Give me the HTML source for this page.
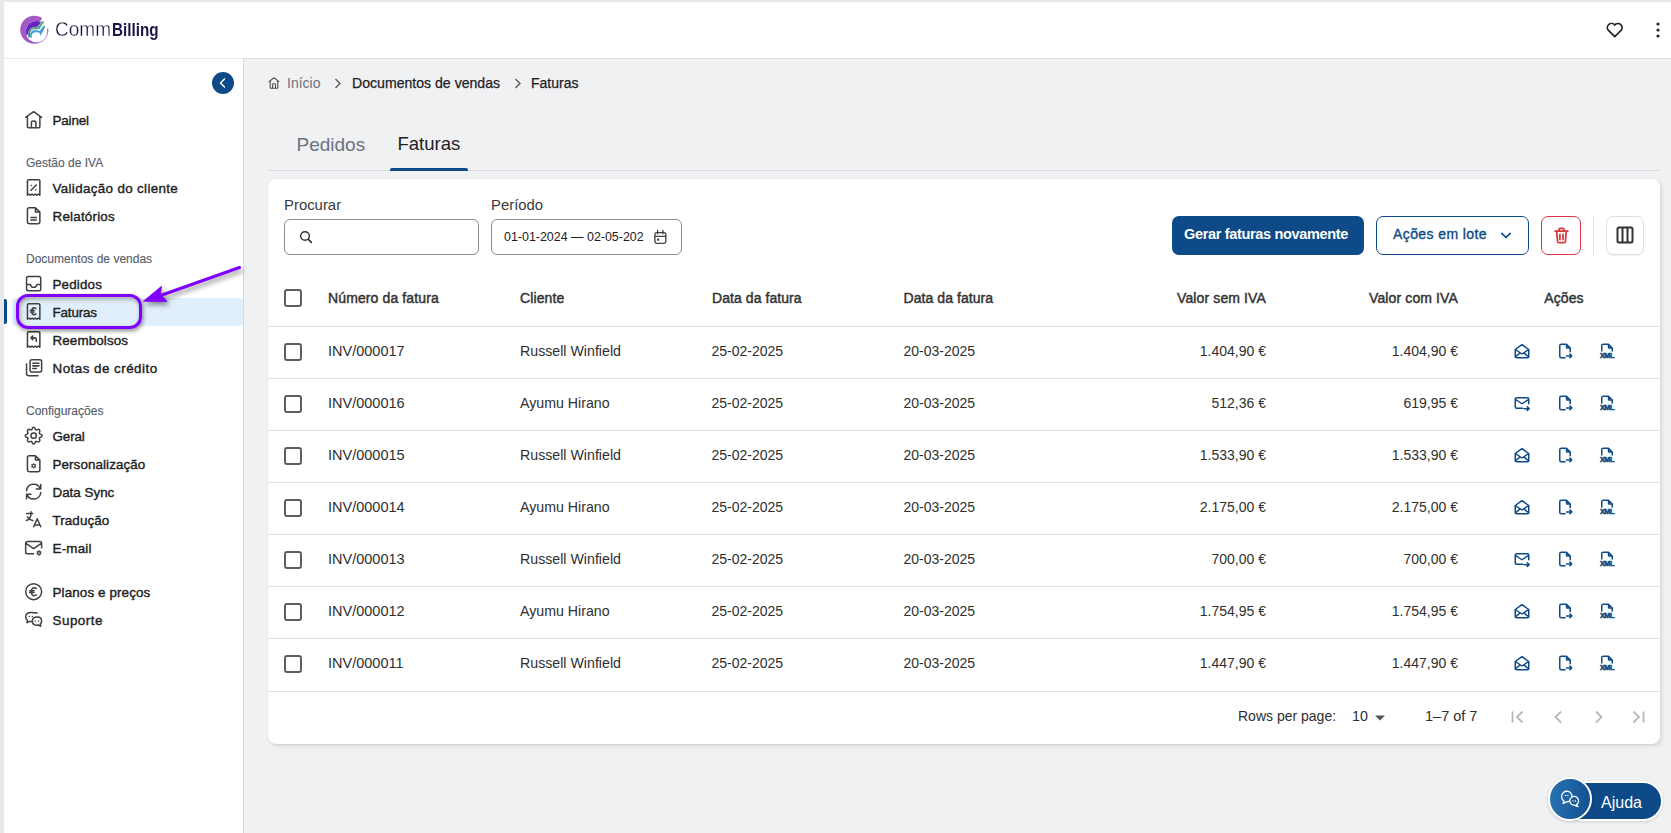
<!DOCTYPE html>
<html><head><meta charset="utf-8">
<style>
*{box-sizing:border-box;margin:0;padding:0}
html,body{width:1671px;height:833px;overflow:hidden;background:#e8e8e9;font-family:"Liberation Sans",sans-serif;color:#222}
.a{position:absolute}
.t{position:absolute;white-space:nowrap;line-height:1}
svg.a{overflow:visible}
</style></head><body>
<div class="a" style="left:4px;top:2px;width:1667px;height:56px;background:#fff"></div>
<div class="a" style="left:4px;top:58px;width:239px;height:1px;background:#ebebec"></div>
<div class="a" style="left:243px;top:58px;width:1428px;height:1px;background:#dcdde1"></div>
<div class="a" style="left:4px;top:59px;width:239px;height:774px;background:#fff"></div>
<div class="a" style="left:243px;top:58px;width:1px;height:775px;background:#d6d8dc"></div>
<div class="a" style="left:244px;top:59px;width:1427px;height:774px;background:#f0f1f3"></div>
<svg class="a" style="left:18px;top:13px;" width="34" height="34" viewBox="0 0 833 833">
<defs><clipPath id="cpin"><circle cx="455" cy="455" r="262"/></clipPath></defs>
<circle cx="400" cy="410" r="345" fill="#a35ac6"/>
<circle cx="455" cy="455" r="262" fill="#fff"/>
<path d="M400 410 L640 60 L800 60 L800 380 Z" fill="#fff"/>
<path d="M620 150 L600 175 L480 335 Q360 330 300 385 Q240 450 235 540 L100 540 L100 100 L620 100 Z" fill="#6a22c2" clip-path="url(#cpin)"/>
<path d="M255 590 Q235 450 300 385 Q360 330 480 335 L590 200 Q625 180 635 225 L530 395 Q470 410 400 400 Q320 400 300 470 Q290 530 300 595 Z" fill="#5aa98a"/>
<path d="M255 590 Q235 450 300 385 L310 410 Q280 470 290 595 Z" fill="#3f8a6e"/>
<path d="M300 610 Q280 500 330 450 Q380 415 450 420 Q500 425 530 440 L640 295 L665 350 L555 560 L520 480 Q470 465 420 470 Q350 480 340 540 Q335 580 335 615 Z" fill="#4a9de0"/>
</svg>
<div class="t" style="top:19.99px;font-size:19.5px;font-weight:400;color:#1d1446;left:54.5px;transform:scaleX(0.975);transform-origin:0 0;-webkit-text-stroke:0.3px #fff">Comm</div>
<div class="t" style="top:20.59px;font-size:18.8px;font-weight:700;color:#1d1446;left:111.5px;transform:scaleX(0.81);transform-origin:0 0">Billing</div>
<svg class="a" style="left:1604.5px;top:20px;" width="19.5" height="19.5" viewBox="0 0 24 24"><path d="M12 20.5 L4 12.5 A4.6 4.6 0 0 1 12 6.2 A4.6 4.6 0 0 1 20 12.5Z" fill="none" stroke="#222" stroke-width="2" stroke-linejoin="round"/></svg>
<svg class="a" style="left:1651px;top:20px;" width="14" height="20" viewBox="0 0 14 20"><circle cx="7" cy="4" r="1.6" fill="#222"/><circle cx="7" cy="10" r="1.6" fill="#222"/><circle cx="7" cy="16" r="1.6" fill="#222"/></svg>
<div class="a" style="left:212px;top:72px;width:22px;height:22px;background:#0d4a87;border-radius:50%"></div>
<svg class="a" style="left:212px;top:72px;" width="22" height="22" viewBox="0 0 22 22"><path d="M12.5 7 L8.5 11 L12.5 15" fill="none" stroke="#fff" stroke-width="1.4" stroke-linecap="round" stroke-linejoin="round"/></svg>
<div class="a" style="left:12px;top:298px;width:231px;height:28px;background:#e1eefb;border-radius:4px"></div>
<div class="a" style="left:4px;top:299px;width:3px;height:25px;background:#0d4a87;border-radius:0 2px 2px 0"></div>
<svg class="a" style="left:23.3px;top:109.3px;" width="21.3" height="21.3" viewBox="0 0 24 24"><path d="M3 9.5 L12 3 L21 9.5 M5 8 V20 Q5 21 6 21 H18 Q19 21 19 20 V8 M9.5 21 V15 Q9.5 13.5 12 13.5 Q14.5 13.5 14.5 15 V21" stroke="#404040" stroke-width="1.7" fill="none" stroke-linecap="round" stroke-linejoin="round"/></svg>
<div class="t" style="top:113.66px;font-size:13.4px;font-weight:400;color:#1f1f24;letter-spacing:-0.147px;left:52.5px;-webkit-text-stroke:0.4px #1f1f24">Painel</div>
<svg class="a" style="left:23.3px;top:177.3px;" width="21.3" height="21.3" viewBox="0 0 24 24"><path d="M5 20.5 V4.5 Q5 3 6.5 3 H17.5 Q19 3 19 4.5 V20.5 Q17.25 18.6 15.5 20.5 Q13.75 18.6 12 20.5 Q10.25 18.6 8.5 20.5 Q6.75 18.6 5 20.5 Z M9 15 L15 9" stroke="#404040" stroke-width="1.7" fill="none" stroke-linecap="round" stroke-linejoin="round"/><circle cx="9.5" cy="9.5" r="0.9" fill="#3a3a3a"/><circle cx="14.5" cy="14.5" r="0.9" fill="#3a3a3a"/></svg>
<div class="t" style="top:181.66px;font-size:13.4px;font-weight:400;color:#1f1f24;letter-spacing:0.338px;left:52.5px;-webkit-text-stroke:0.4px #1f1f24">Validação do cliente</div>
<svg class="a" style="left:23.3px;top:205.3px;" width="21.3" height="21.3" viewBox="0 0 24 24"><path d="M14 3 H7 Q5 3 5 5 V19 Q5 21 7 21 H17 Q19 21 19 19 V8 Z M14 3 V8 H19 M9 14 H15 M9 17 H15" stroke="#404040" stroke-width="1.7" fill="none" stroke-linecap="round" stroke-linejoin="round"/></svg>
<div class="t" style="top:209.66px;font-size:13.4px;font-weight:400;color:#1f1f24;letter-spacing:0.211px;left:52.5px;-webkit-text-stroke:0.4px #1f1f24">Relatórios</div>
<svg class="a" style="left:23.3px;top:273.3px;" width="21.3" height="21.3" viewBox="0 0 24 24"><path d="M4 6 Q4 4 6 4 H18 Q20 4 20 6 V18 Q20 20 18 20 H6 Q4 20 4 18 Z M4 13 H8 L10 16 H14 L16 13 H20" stroke="#404040" stroke-width="1.7" fill="none" stroke-linecap="round" stroke-linejoin="round"/></svg>
<div class="t" style="top:277.66px;font-size:13.4px;font-weight:400;color:#1f1f24;letter-spacing:0.166px;left:52.5px;-webkit-text-stroke:0.4px #1f1f24">Pedidos</div>
<svg class="a" style="left:23.3px;top:301.3px;" width="21.3" height="21.3" viewBox="0 0 24 24"><path d="M5 20.5 V4.5 Q5 3 6.5 3 H17.5 Q19 3 19 4.5 V20.5 Q17.25 18.6 15.5 20.5 Q13.75 18.6 12 20.5 Q10.25 18.6 8.5 20.5 Q6.75 18.6 5 20.5 Z M14.5 8.5 Q13.5 7.5 12.5 7.5 Q10 7.5 10 11.5 Q10 15.5 12.5 15.5 Q13.5 15.5 14.5 14.5 M8.5 10.5 H12.5 M8.5 12.5 H12.5" stroke="#404040" stroke-width="1.7" fill="none" stroke-linecap="round" stroke-linejoin="round"/></svg>
<div class="t" style="top:305.66px;font-size:13.4px;font-weight:400;color:#1f1f24;letter-spacing:-0.151px;left:52.5px;-webkit-text-stroke:0.4px #1f1f24">Faturas</div>
<svg class="a" style="left:23.3px;top:329.3px;" width="21.3" height="21.3" viewBox="0 0 24 24"><path d="M5 20.5 V4.5 Q5 3 6.5 3 H17.5 Q19 3 19 4.5 V20.5 Q17.25 18.6 15.5 20.5 Q13.75 18.6 12 20.5 Q10.25 18.6 8.5 20.5 Q6.75 18.6 5 20.5 Z M11 8 L9 10 L11 12 M9 10 H13 Q15 10 15 12.5 V14" stroke="#404040" stroke-width="1.7" fill="none" stroke-linecap="round" stroke-linejoin="round"/></svg>
<div class="t" style="top:333.66px;font-size:13.4px;font-weight:400;color:#1f1f24;letter-spacing:0.118px;left:52.5px;-webkit-text-stroke:0.4px #1f1f24">Reembolsos</div>
<svg class="a" style="left:23.3px;top:357.3px;" width="21.3" height="21.3" viewBox="0 0 24 24"><path d="M8 5 Q8 3 10 3 H19 Q21 3 21 5 V15 Q21 17 19 17 H10 Q8 17 8 15 Z M11 7 H18 M11 10 H18 M11 13 H15 M4 8 V19 Q4 21 6 21 H17" stroke="#404040" stroke-width="1.7" fill="none" stroke-linecap="round" stroke-linejoin="round"/></svg>
<div class="t" style="top:361.66px;font-size:13.4px;font-weight:400;color:#1f1f24;letter-spacing:0.472px;left:52.5px;-webkit-text-stroke:0.4px #1f1f24">Notas de crédito</div>
<svg class="a" style="left:23.3px;top:425.3px;" width="21.3" height="21.3" viewBox="0 0 24 24"><path d="M10.3 4.3 Q10.8 2.5 12 2.5 Q13.2 2.5 13.7 4.3 Q14.3 6 16 5.3 Q17.7 4.3 18.5 5.5 Q19.5 6.5 18.7 8 Q17.8 9.7 19.7 10.3 Q21.5 10.8 21.5 12 Q21.5 13.2 19.7 13.7 Q17.8 14.3 18.7 16 Q19.5 17.5 18.5 18.5 Q17.5 19.5 16 18.7 Q14.3 17.8 13.7 19.7 Q13.2 21.5 12 21.5 Q10.8 21.5 10.3 19.7 Q9.7 17.8 8 18.7 Q6.5 19.5 5.5 18.5 Q4.5 17.5 5.3 16 Q6.2 14.3 4.3 13.7 Q2.5 13.2 2.5 12 Q2.5 10.8 4.3 10.3 Q6.2 9.7 5.3 8 Q4.5 6.5 5.5 5.5 Q6.5 4.5 8 5.3 Q9.7 6.2 10.3 4.3Z" stroke="#404040" stroke-width="1.7" fill="none" stroke-linecap="round" stroke-linejoin="round"/><circle cx="12" cy="12" r="3" stroke="#404040" stroke-width="1.7" fill="none" stroke-linecap="round" stroke-linejoin="round"/></svg>
<div class="t" style="top:429.66px;font-size:13.4px;font-weight:400;color:#1f1f24;letter-spacing:-0.113px;left:52.5px;-webkit-text-stroke:0.4px #1f1f24">Geral</div>
<svg class="a" style="left:23.3px;top:453.3px;" width="21.3" height="21.3" viewBox="0 0 24 24"><path d="M14 3 H7 Q5 3 5 5 V19 Q5 21 7 21 H17 Q19 21 19 19 V8 Z M14 3 V8 H19" stroke="#404040" stroke-width="1.7" fill="none" stroke-linecap="round" stroke-linejoin="round"/><path d="M12 11.5 V17.5 M9.4 13 L14.6 16 M9.4 16 L14.6 13" stroke="#3a3a3a" stroke-width="1.3" fill="none"/><circle cx="12" cy="14.5" r="1.6" fill="#fff" stroke="#3a3a3a" stroke-width="1.2"/></svg>
<div class="t" style="top:457.66px;font-size:13.4px;font-weight:400;color:#1f1f24;letter-spacing:0.095px;left:52.5px;-webkit-text-stroke:0.4px #1f1f24">Personalização</div>
<svg class="a" style="left:23.3px;top:481.3px;" width="21.3" height="21.3" viewBox="0 0 24 24"><path d="M4 11 A8 8 0 0 1 19.5 9 M20 4 V9 H15 M20 13 A8 8 0 0 1 4.5 15 M4 20 V15 H9" stroke="#404040" stroke-width="1.7" fill="none" stroke-linecap="round" stroke-linejoin="round"/></svg>
<div class="t" style="top:485.66px;font-size:13.4px;font-weight:400;color:#1f1f24;letter-spacing:0.002px;left:52.5px;-webkit-text-stroke:0.4px #1f1f24">Data Sync</div>
<svg class="a" style="left:23.3px;top:509.3px;" width="21.3" height="21.3" viewBox="0 0 24 24"><path d="M4 5 H11 M9 3 V5 Q9 11 4 13 M5 9 Q7 12 11 13 M12 20 L16 11 L20 20 M13 18 H19" stroke="#404040" stroke-width="1.7" fill="none" stroke-linecap="round" stroke-linejoin="round"/></svg>
<div class="t" style="top:513.66px;font-size:13.4px;font-weight:400;color:#1f1f24;letter-spacing:0.089px;left:52.5px;-webkit-text-stroke:0.4px #1f1f24">Tradução</div>
<svg class="a" style="left:23.3px;top:537.3px;" width="21.3" height="21.3" viewBox="0 0 24 24"><path d="M12 19 H5 Q3 19 3 17 V7 Q3 5 5 5 H19 Q21 5 21 7 V12 M3 7 L12 13 L21 7" stroke="#404040" stroke-width="1.7" fill="none" stroke-linecap="round" stroke-linejoin="round"/><path d="M18 15 V21 M15.4 16.5 L20.6 19.5 M15.4 19.5 L20.6 16.5" stroke="#3a3a3a" stroke-width="1.4" fill="none"/><circle cx="18" cy="18" r="1.5" fill="#fff" stroke="#3a3a3a" stroke-width="1.2"/></svg>
<div class="t" style="top:541.66px;font-size:13.4px;font-weight:400;color:#1f1f24;letter-spacing:0.209px;left:52.5px;-webkit-text-stroke:0.4px #1f1f24">E-mail</div>
<svg class="a" style="left:23.3px;top:581.3px;" width="21.3" height="21.3" viewBox="0 0 24 24"><circle cx="12" cy="12" r="9" stroke="#404040" stroke-width="1.7" fill="none" stroke-linecap="round" stroke-linejoin="round"/><path d="M15 8.5 Q14 7.5 12.7 7.5 Q9.5 7.5 9.5 12 Q9.5 16.5 12.7 16.5 Q14 16.5 15 15.5 M7.5 11 H12.5 M7.5 13 H12.5" stroke="#404040" stroke-width="1.7" fill="none" stroke-linecap="round" stroke-linejoin="round"/></svg>
<div class="t" style="top:585.66px;font-size:13.4px;font-weight:400;color:#1f1f24;letter-spacing:0.126px;left:52.5px;-webkit-text-stroke:0.4px #1f1f24">Planos e preços</div>
<svg class="a" style="left:23.3px;top:609.3px;" width="21.3" height="21.3" viewBox="0 0 24 24"><path d="M9 4 Q3 4 3 9 Q3 11.5 5 12.8 L4.5 15.5 L7.5 14 Q8.5 14.2 9.5 14.2 M16 9 Q21 9 21 13.5 Q21 15.5 19.5 16.7 L20 19.5 L17.3 18 Q16.5 18.2 15.5 18.2 Q10.5 18.2 10.5 13.5 Q10.5 9 16 9 Z M15.8 4.6 Q14 4 9 4" stroke="#404040" stroke-width="1.7" fill="none" stroke-linecap="round" stroke-linejoin="round"/><circle cx="7" cy="8.5" r="0.8" fill="#3a3a3a"/><circle cx="10.5" cy="8.5" r="0.8" fill="#3a3a3a"/><circle cx="14" cy="13.5" r="0.8" fill="#3a3a3a"/><circle cx="17.5" cy="13.5" r="0.8" fill="#3a3a3a"/></svg>
<div class="t" style="top:613.66px;font-size:13.4px;font-weight:400;color:#1f1f24;letter-spacing:0.499px;left:52.5px;-webkit-text-stroke:0.4px #1f1f24">Suporte</div>
<div class="t" style="top:156.84px;font-size:12px;font-weight:400;color:#58606c;left:26px;-webkit-text-stroke:0.15px #58606c">Gestão de IVA</div>
<div class="t" style="top:252.84px;font-size:12px;font-weight:400;color:#58606c;left:26px;-webkit-text-stroke:0.15px #58606c">Documentos de vendas</div>
<div class="t" style="top:404.84px;font-size:12px;font-weight:400;color:#58606c;left:26px;-webkit-text-stroke:0.15px #58606c">Configurações</div>
<div class="a" style="left:16px;top:294px;width:126px;height:35px;border:3px solid #8000ff;border-radius:12px;box-shadow:1px 2px 4px rgba(0,0,0,.45), inset 1px 2px 4px rgba(0,0,0,.35)"></div>
<svg class="a" style="left:0px;top:0px;" width="1" height="1" viewBox="0 0 1 1"><g style="filter:drop-shadow(2px 3px 2.5px rgba(0,0,0,.45))"><path d="M239.5 267.5 L162 295" stroke="#8000ff" stroke-width="3" stroke-linecap="round"/><path d="M143.3 301.3 L161.5 286.3 L160.5 294 L167 301.5 Z" fill="#8000ff" stroke="#8000ff" stroke-width="0.8" stroke-linejoin="round"/></g></svg>
<svg class="a" style="left:267.25px;top:76.25px;" width="14" height="14" viewBox="0 0 24 24"><path d="M3 10 L12 3 L21 10 M5.5 8 V20 Q5.5 21 6.5 21 H17.5 Q18.5 21 18.5 20 V8 M9.5 21 V15 Q9.5 13 12 13 Q14.5 13 14.5 15 V21" stroke="#4a4a4a" stroke-width="1.8" fill="none" stroke-linejoin="round"/></svg>
<div class="t" style="top:76.15px;font-size:14px;font-weight:400;color:#6b7280;left:287px;">Início</div>
<svg class="a" style="left:334px;top:78px;" width="8" height="11" viewBox="0 0 8 11"><path d="M1.5 1 L6 5.5 L1.5 10" stroke="#555" stroke-width="1.3" fill="none"/></svg>
<div class="t" style="top:76.06px;font-size:14.1px;font-weight:400;color:#1f2024;left:352px;-webkit-text-stroke:0.25px #1f2024">Documentos de vendas</div>
<svg class="a" style="left:514px;top:78px;" width="8" height="11" viewBox="0 0 8 11"><path d="M1.5 1 L6 5.5 L1.5 10" stroke="#555" stroke-width="1.3" fill="none"/></svg>
<div class="t" style="top:76.15px;font-size:14px;font-weight:400;color:#1f2024;left:531px;-webkit-text-stroke:0.25px #1f2024">Faturas</div>
<div class="t" style="top:134.92px;font-size:19px;font-weight:400;color:#6b7280;left:296.5px;">Pedidos</div>
<div class="t" style="top:135.34px;font-size:18.5px;font-weight:400;color:#1f2024;left:397.5px;">Faturas</div>
<div class="a" style="left:268px;top:170px;width:1392px;height:1px;background:#dcdde1"></div>
<div class="a" style="left:390px;top:168px;width:78px;height:3px;background:#0d4a87;border-radius:2px 2px 0 0"></div>
<div class="a" style="left:268px;top:179px;width:1392px;height:565px;background:#fff;border-radius:8px;box-shadow:2px 2px 4px rgba(0,0,0,.10), 0 1px 2px rgba(0,0,0,.06)"></div>
<div class="t" style="top:198.39px;font-size:14.9px;font-weight:400;color:#3a3a3a;left:284px;">Procurar</div>
<div class="t" style="top:198.39px;font-size:14.9px;font-weight:400;color:#3a3a3a;left:491px;">Período</div>
<div class="a" style="left:284px;top:219px;width:195px;height:36px;border:1px solid #8c8c8c;border-radius:6px;background:#fff"></div>
<svg class="a" style="left:298px;top:229px;" width="16" height="16" viewBox="0 0 24 24"><circle cx="10.5" cy="10.5" r="6.5" stroke="#333" stroke-width="2.2" fill="none"/><path d="M15.5 15.5 L20 20" stroke="#333" stroke-width="2.4" stroke-linecap="round"/></svg>
<div class="a" style="left:491px;top:219px;width:191px;height:36px;border:1px solid #8c8c8c;border-radius:6px;background:#fff"></div>
<div class="t" style="top:231.46px;font-size:12.45px;font-weight:400;color:#1f2024;left:504px;">01-01-2024 — 02-05-202</div>
<svg class="a" style="left:652px;top:228px;" width="16" height="18" viewBox="0 0 16 18"><rect x="2.9" y="4.6" width="10.9" height="10.7" rx="1.8" stroke="#444" stroke-width="1.35" fill="none"/><path d="M2.9 8.4 H13.8 M5.6 2.4 V5.8 M10.9 2.4 V5.8" stroke="#444" stroke-width="1.35" fill="none" stroke-linecap="round"/><rect x="5" y="10.6" width="2.1" height="2.1" fill="#444"/></svg>
<div class="a" style="left:1172px;top:216px;width:192px;height:39px;background:#0d4a87;border-radius:7px"></div>
<div class="t" style="top:227.03px;font-size:14.5px;font-weight:700;color:#fff;letter-spacing:-0.33px;left:1184px;">Gerar faturas novamente</div>
<div class="a" style="left:1376px;top:216px;width:153px;height:39px;border:1px solid #0d4a87;border-radius:7px"></div>
<div class="t" style="top:227.15px;font-size:14px;font-weight:400;color:#0d4a87;letter-spacing:0.4px;left:1393px;-webkit-text-stroke:0.35px #0d4a87">Ações em lote</div>
<svg class="a" style="left:1500px;top:230.5px;" width="12" height="10" viewBox="0 0 12 10"><path d="M1.8 2.3 L6 6.5 L10.2 2.3" stroke="#0d4a87" stroke-width="1.7" fill="none" stroke-linecap="round" stroke-linejoin="round"/></svg>
<div class="a" style="left:1541px;top:216px;width:40px;height:39px;border:1px solid #dc3545;border-radius:7px"></div>
<svg class="a" style="left:1551.5px;top:225.5px;" width="19" height="19" viewBox="0 0 24 24"><path d="M4 6.5 H20 M9 6 V4 Q9 3 10 3 H14 Q15 3 15 4 V6 M6 7 L7 19.5 Q7.2 21 8.7 21 H15.3 Q16.8 21 17 19.5 L18 7 M10 10.5 V17 M14 10.5 V17" stroke="#d9363e" stroke-width="2.2" fill="none" stroke-linecap="round" stroke-linejoin="round"/></svg>
<div class="a" style="left:1593px;top:216px;width:1px;height:39px;background:#e0e0e0"></div>
<div class="a" style="left:1606px;top:216px;width:38px;height:39px;border:1px solid #dedede;border-radius:7px;box-shadow:0 1px 1px rgba(0,0,0,.06)"></div>
<svg class="a" style="left:1616px;top:226px;" width="18" height="18" viewBox="0 0 18 18"><rect x="1.5" y="1.5" width="15" height="15" rx="1.5" stroke="#333" stroke-width="2" fill="none"/><path d="M6.5 1.5 V16.5 M11.5 1.5 V16.5" stroke="#333" stroke-width="2"/></svg>
<div class="a" style="left:284px;top:289px;width:18px;height:18px;border:2px solid #5f5f5f;border-radius:3px"></div>
<div class="t" style="top:290.65px;font-size:14px;font-weight:400;color:#333333;letter-spacing:0.12px;left:328px;-webkit-text-stroke:0.45px #333333">Número da fatura</div>
<div class="t" style="top:290.65px;font-size:14px;font-weight:400;color:#333333;letter-spacing:0.12px;left:520px;-webkit-text-stroke:0.45px #333333">Cliente</div>
<div class="t" style="top:290.65px;font-size:14px;font-weight:400;color:#333333;letter-spacing:0.07px;left:712px;-webkit-text-stroke:0.45px #333333">Data da fatura</div>
<div class="t" style="top:290.65px;font-size:14px;font-weight:400;color:#333333;letter-spacing:0.07px;left:903.5px;-webkit-text-stroke:0.45px #333333">Data da fatura</div>
<div class="t" style="top:290.65px;font-size:14px;font-weight:400;color:#333333;letter-spacing:0.12px;right:405px;-webkit-text-stroke:0.45px #333333">Valor sem IVA</div>
<div class="t" style="top:290.65px;font-size:14px;font-weight:400;color:#333333;letter-spacing:0.12px;right:213px;-webkit-text-stroke:0.45px #333333">Valor com IVA</div>
<div class="t" style="top:290.65px;font-size:14px;font-weight:400;color:#333333;letter-spacing:0.12px;left:1264px;width:600px;text-align:center;-webkit-text-stroke:0.45px #333333">Ações</div>
<div class="a" style="left:268px;top:326px;width:1392px;height:1px;background:#e0e0e0"></div>
<div class="a" style="left:284px;top:343px;width:18px;height:18px;border:2px solid #5f5f5f;border-radius:3px"></div>
<div class="t" style="top:343.73px;font-size:14.5px;font-weight:400;color:#2f2f2f;left:328px;">INV/000017</div>
<div class="t" style="top:343.98px;font-size:14.2px;font-weight:400;color:#2f2f2f;left:520px;">Russell Winfield</div>
<div class="t" style="top:344.15px;font-size:14px;font-weight:400;color:#2f2f2f;left:711.5px;">25-02-2025</div>
<div class="t" style="top:344.15px;font-size:14px;font-weight:400;color:#2f2f2f;left:903.5px;">20-03-2025</div>
<div class="t" style="top:344.15px;font-size:14px;font-weight:400;color:#2f2f2f;right:405px;">1.404,90 €</div>
<div class="t" style="top:344.15px;font-size:14px;font-weight:400;color:#2f2f2f;right:213px;">1.404,90 €</div>
<svg class="a" style="left:1513px;top:342px;" width="18" height="18" viewBox="0 0 24 24"><path d="M3 10 L12 3.5 L21 10 V19 Q21 21 19 21 H5 Q3 21 3 19 Z M3 10 L12 16 L21 10 M3 20 L9.5 14.5 M21 20 L14.5 14.5" stroke="#0d4a87" stroke-width="2" fill="none" stroke-linecap="round" stroke-linejoin="round"/></svg>
<svg class="a" style="left:1556px;top:342px;" width="18" height="18" viewBox="0 0 24 24"><path d="M14 3 H7 Q5 3 5 5 V19 Q5 21 7 21 H12 M14 3 L19 8 V13 M14 3 V7 Q14 8 15 8 H19 M14 18.5 H21 M18.5 16 L21 18.5 L18.5 21" stroke="#0d4a87" stroke-width="2" fill="none" stroke-linecap="round" stroke-linejoin="round"/></svg>
<svg class="a" style="left:1598px;top:342px;" width="18" height="18" viewBox="0 0 24 24"><path d="M5 12 V5 Q5 3 7 3 H14 L19 8 V12 M14 3 V7 Q14 8 15 8 H19" stroke="#0d4a87" stroke-width="2" fill="none" stroke-linecap="round" stroke-linejoin="round"/><text x="12" y="21.8" font-family="Liberation Sans" font-weight="700" font-size="9.6" fill="#0d4a87" stroke="#0d4a87" stroke-width="0.7" text-anchor="middle" letter-spacing="-0.5" textLength="19" lengthAdjust="spacingAndGlyphs">XML</text></svg>
<div class="a" style="left:268px;top:378px;width:1392px;height:1px;background:#e0e0e0"></div>
<div class="a" style="left:284px;top:395px;width:18px;height:18px;border:2px solid #5f5f5f;border-radius:3px"></div>
<div class="t" style="top:395.73px;font-size:14.5px;font-weight:400;color:#2f2f2f;left:328px;">INV/000016</div>
<div class="t" style="top:395.98px;font-size:14.2px;font-weight:400;color:#2f2f2f;left:520px;">Ayumu Hirano</div>
<div class="t" style="top:396.15px;font-size:14px;font-weight:400;color:#2f2f2f;left:711.5px;">25-02-2025</div>
<div class="t" style="top:396.15px;font-size:14px;font-weight:400;color:#2f2f2f;left:903.5px;">20-03-2025</div>
<div class="t" style="top:396.15px;font-size:14px;font-weight:400;color:#2f2f2f;right:405px;">512,36 €</div>
<div class="t" style="top:396.15px;font-size:14px;font-weight:400;color:#2f2f2f;right:213px;">619,95 €</div>
<svg class="a" style="left:1513px;top:394px;" width="18" height="18" viewBox="0 0 24 24"><path d="M13 19 H5 Q3 19 3 17 V7 Q3 5 5 5 H19 Q21 5 21 7 V13 M3 7 L12 13 L21 7 M15 19.5 H21.5 M19 17 L21.5 19.5 L19 22" stroke="#0d4a87" stroke-width="2" fill="none" stroke-linecap="round" stroke-linejoin="round"/></svg>
<svg class="a" style="left:1556px;top:394px;" width="18" height="18" viewBox="0 0 24 24"><path d="M14 3 H7 Q5 3 5 5 V19 Q5 21 7 21 H12 M14 3 L19 8 V13 M14 3 V7 Q14 8 15 8 H19 M14 18.5 H21 M18.5 16 L21 18.5 L18.5 21" stroke="#0d4a87" stroke-width="2" fill="none" stroke-linecap="round" stroke-linejoin="round"/></svg>
<svg class="a" style="left:1598px;top:394px;" width="18" height="18" viewBox="0 0 24 24"><path d="M5 12 V5 Q5 3 7 3 H14 L19 8 V12 M14 3 V7 Q14 8 15 8 H19" stroke="#0d4a87" stroke-width="2" fill="none" stroke-linecap="round" stroke-linejoin="round"/><text x="12" y="21.8" font-family="Liberation Sans" font-weight="700" font-size="9.6" fill="#0d4a87" stroke="#0d4a87" stroke-width="0.7" text-anchor="middle" letter-spacing="-0.5" textLength="19" lengthAdjust="spacingAndGlyphs">XML</text></svg>
<div class="a" style="left:268px;top:430px;width:1392px;height:1px;background:#e0e0e0"></div>
<div class="a" style="left:284px;top:447px;width:18px;height:18px;border:2px solid #5f5f5f;border-radius:3px"></div>
<div class="t" style="top:447.73px;font-size:14.5px;font-weight:400;color:#2f2f2f;left:328px;">INV/000015</div>
<div class="t" style="top:447.98px;font-size:14.2px;font-weight:400;color:#2f2f2f;left:520px;">Russell Winfield</div>
<div class="t" style="top:448.15px;font-size:14px;font-weight:400;color:#2f2f2f;left:711.5px;">25-02-2025</div>
<div class="t" style="top:448.15px;font-size:14px;font-weight:400;color:#2f2f2f;left:903.5px;">20-03-2025</div>
<div class="t" style="top:448.15px;font-size:14px;font-weight:400;color:#2f2f2f;right:405px;">1.533,90 €</div>
<div class="t" style="top:448.15px;font-size:14px;font-weight:400;color:#2f2f2f;right:213px;">1.533,90 €</div>
<svg class="a" style="left:1513px;top:446px;" width="18" height="18" viewBox="0 0 24 24"><path d="M3 10 L12 3.5 L21 10 V19 Q21 21 19 21 H5 Q3 21 3 19 Z M3 10 L12 16 L21 10 M3 20 L9.5 14.5 M21 20 L14.5 14.5" stroke="#0d4a87" stroke-width="2" fill="none" stroke-linecap="round" stroke-linejoin="round"/></svg>
<svg class="a" style="left:1556px;top:446px;" width="18" height="18" viewBox="0 0 24 24"><path d="M14 3 H7 Q5 3 5 5 V19 Q5 21 7 21 H12 M14 3 L19 8 V13 M14 3 V7 Q14 8 15 8 H19 M14 18.5 H21 M18.5 16 L21 18.5 L18.5 21" stroke="#0d4a87" stroke-width="2" fill="none" stroke-linecap="round" stroke-linejoin="round"/></svg>
<svg class="a" style="left:1598px;top:446px;" width="18" height="18" viewBox="0 0 24 24"><path d="M5 12 V5 Q5 3 7 3 H14 L19 8 V12 M14 3 V7 Q14 8 15 8 H19" stroke="#0d4a87" stroke-width="2" fill="none" stroke-linecap="round" stroke-linejoin="round"/><text x="12" y="21.8" font-family="Liberation Sans" font-weight="700" font-size="9.6" fill="#0d4a87" stroke="#0d4a87" stroke-width="0.7" text-anchor="middle" letter-spacing="-0.5" textLength="19" lengthAdjust="spacingAndGlyphs">XML</text></svg>
<div class="a" style="left:268px;top:482px;width:1392px;height:1px;background:#e0e0e0"></div>
<div class="a" style="left:284px;top:499px;width:18px;height:18px;border:2px solid #5f5f5f;border-radius:3px"></div>
<div class="t" style="top:499.73px;font-size:14.5px;font-weight:400;color:#2f2f2f;left:328px;">INV/000014</div>
<div class="t" style="top:499.98px;font-size:14.2px;font-weight:400;color:#2f2f2f;left:520px;">Ayumu Hirano</div>
<div class="t" style="top:500.15px;font-size:14px;font-weight:400;color:#2f2f2f;left:711.5px;">25-02-2025</div>
<div class="t" style="top:500.15px;font-size:14px;font-weight:400;color:#2f2f2f;left:903.5px;">20-03-2025</div>
<div class="t" style="top:500.15px;font-size:14px;font-weight:400;color:#2f2f2f;right:405px;">2.175,00 €</div>
<div class="t" style="top:500.15px;font-size:14px;font-weight:400;color:#2f2f2f;right:213px;">2.175,00 €</div>
<svg class="a" style="left:1513px;top:498px;" width="18" height="18" viewBox="0 0 24 24"><path d="M3 10 L12 3.5 L21 10 V19 Q21 21 19 21 H5 Q3 21 3 19 Z M3 10 L12 16 L21 10 M3 20 L9.5 14.5 M21 20 L14.5 14.5" stroke="#0d4a87" stroke-width="2" fill="none" stroke-linecap="round" stroke-linejoin="round"/></svg>
<svg class="a" style="left:1556px;top:498px;" width="18" height="18" viewBox="0 0 24 24"><path d="M14 3 H7 Q5 3 5 5 V19 Q5 21 7 21 H12 M14 3 L19 8 V13 M14 3 V7 Q14 8 15 8 H19 M14 18.5 H21 M18.5 16 L21 18.5 L18.5 21" stroke="#0d4a87" stroke-width="2" fill="none" stroke-linecap="round" stroke-linejoin="round"/></svg>
<svg class="a" style="left:1598px;top:498px;" width="18" height="18" viewBox="0 0 24 24"><path d="M5 12 V5 Q5 3 7 3 H14 L19 8 V12 M14 3 V7 Q14 8 15 8 H19" stroke="#0d4a87" stroke-width="2" fill="none" stroke-linecap="round" stroke-linejoin="round"/><text x="12" y="21.8" font-family="Liberation Sans" font-weight="700" font-size="9.6" fill="#0d4a87" stroke="#0d4a87" stroke-width="0.7" text-anchor="middle" letter-spacing="-0.5" textLength="19" lengthAdjust="spacingAndGlyphs">XML</text></svg>
<div class="a" style="left:268px;top:534px;width:1392px;height:1px;background:#e0e0e0"></div>
<div class="a" style="left:284px;top:551px;width:18px;height:18px;border:2px solid #5f5f5f;border-radius:3px"></div>
<div class="t" style="top:551.73px;font-size:14.5px;font-weight:400;color:#2f2f2f;left:328px;">INV/000013</div>
<div class="t" style="top:551.98px;font-size:14.2px;font-weight:400;color:#2f2f2f;left:520px;">Russell Winfield</div>
<div class="t" style="top:552.15px;font-size:14px;font-weight:400;color:#2f2f2f;left:711.5px;">25-02-2025</div>
<div class="t" style="top:552.15px;font-size:14px;font-weight:400;color:#2f2f2f;left:903.5px;">20-03-2025</div>
<div class="t" style="top:552.15px;font-size:14px;font-weight:400;color:#2f2f2f;right:405px;">700,00 €</div>
<div class="t" style="top:552.15px;font-size:14px;font-weight:400;color:#2f2f2f;right:213px;">700,00 €</div>
<svg class="a" style="left:1513px;top:550px;" width="18" height="18" viewBox="0 0 24 24"><path d="M13 19 H5 Q3 19 3 17 V7 Q3 5 5 5 H19 Q21 5 21 7 V13 M3 7 L12 13 L21 7 M15 19.5 H21.5 M19 17 L21.5 19.5 L19 22" stroke="#0d4a87" stroke-width="2" fill="none" stroke-linecap="round" stroke-linejoin="round"/></svg>
<svg class="a" style="left:1556px;top:550px;" width="18" height="18" viewBox="0 0 24 24"><path d="M14 3 H7 Q5 3 5 5 V19 Q5 21 7 21 H12 M14 3 L19 8 V13 M14 3 V7 Q14 8 15 8 H19 M14 18.5 H21 M18.5 16 L21 18.5 L18.5 21" stroke="#0d4a87" stroke-width="2" fill="none" stroke-linecap="round" stroke-linejoin="round"/></svg>
<svg class="a" style="left:1598px;top:550px;" width="18" height="18" viewBox="0 0 24 24"><path d="M5 12 V5 Q5 3 7 3 H14 L19 8 V12 M14 3 V7 Q14 8 15 8 H19" stroke="#0d4a87" stroke-width="2" fill="none" stroke-linecap="round" stroke-linejoin="round"/><text x="12" y="21.8" font-family="Liberation Sans" font-weight="700" font-size="9.6" fill="#0d4a87" stroke="#0d4a87" stroke-width="0.7" text-anchor="middle" letter-spacing="-0.5" textLength="19" lengthAdjust="spacingAndGlyphs">XML</text></svg>
<div class="a" style="left:268px;top:586px;width:1392px;height:1px;background:#e0e0e0"></div>
<div class="a" style="left:284px;top:603px;width:18px;height:18px;border:2px solid #5f5f5f;border-radius:3px"></div>
<div class="t" style="top:603.73px;font-size:14.5px;font-weight:400;color:#2f2f2f;left:328px;">INV/000012</div>
<div class="t" style="top:603.98px;font-size:14.2px;font-weight:400;color:#2f2f2f;left:520px;">Ayumu Hirano</div>
<div class="t" style="top:604.15px;font-size:14px;font-weight:400;color:#2f2f2f;left:711.5px;">25-02-2025</div>
<div class="t" style="top:604.15px;font-size:14px;font-weight:400;color:#2f2f2f;left:903.5px;">20-03-2025</div>
<div class="t" style="top:604.15px;font-size:14px;font-weight:400;color:#2f2f2f;right:405px;">1.754,95 €</div>
<div class="t" style="top:604.15px;font-size:14px;font-weight:400;color:#2f2f2f;right:213px;">1.754,95 €</div>
<svg class="a" style="left:1513px;top:602px;" width="18" height="18" viewBox="0 0 24 24"><path d="M3 10 L12 3.5 L21 10 V19 Q21 21 19 21 H5 Q3 21 3 19 Z M3 10 L12 16 L21 10 M3 20 L9.5 14.5 M21 20 L14.5 14.5" stroke="#0d4a87" stroke-width="2" fill="none" stroke-linecap="round" stroke-linejoin="round"/></svg>
<svg class="a" style="left:1556px;top:602px;" width="18" height="18" viewBox="0 0 24 24"><path d="M14 3 H7 Q5 3 5 5 V19 Q5 21 7 21 H12 M14 3 L19 8 V13 M14 3 V7 Q14 8 15 8 H19 M14 18.5 H21 M18.5 16 L21 18.5 L18.5 21" stroke="#0d4a87" stroke-width="2" fill="none" stroke-linecap="round" stroke-linejoin="round"/></svg>
<svg class="a" style="left:1598px;top:602px;" width="18" height="18" viewBox="0 0 24 24"><path d="M5 12 V5 Q5 3 7 3 H14 L19 8 V12 M14 3 V7 Q14 8 15 8 H19" stroke="#0d4a87" stroke-width="2" fill="none" stroke-linecap="round" stroke-linejoin="round"/><text x="12" y="21.8" font-family="Liberation Sans" font-weight="700" font-size="9.6" fill="#0d4a87" stroke="#0d4a87" stroke-width="0.7" text-anchor="middle" letter-spacing="-0.5" textLength="19" lengthAdjust="spacingAndGlyphs">XML</text></svg>
<div class="a" style="left:268px;top:638px;width:1392px;height:1px;background:#e0e0e0"></div>
<div class="a" style="left:284px;top:655px;width:18px;height:18px;border:2px solid #5f5f5f;border-radius:3px"></div>
<div class="t" style="top:655.73px;font-size:14.5px;font-weight:400;color:#2f2f2f;left:328px;">INV/000011</div>
<div class="t" style="top:655.98px;font-size:14.2px;font-weight:400;color:#2f2f2f;left:520px;">Russell Winfield</div>
<div class="t" style="top:656.15px;font-size:14px;font-weight:400;color:#2f2f2f;left:711.5px;">25-02-2025</div>
<div class="t" style="top:656.15px;font-size:14px;font-weight:400;color:#2f2f2f;left:903.5px;">20-03-2025</div>
<div class="t" style="top:656.15px;font-size:14px;font-weight:400;color:#2f2f2f;right:405px;">1.447,90 €</div>
<div class="t" style="top:656.15px;font-size:14px;font-weight:400;color:#2f2f2f;right:213px;">1.447,90 €</div>
<svg class="a" style="left:1513px;top:654px;" width="18" height="18" viewBox="0 0 24 24"><path d="M3 10 L12 3.5 L21 10 V19 Q21 21 19 21 H5 Q3 21 3 19 Z M3 10 L12 16 L21 10 M3 20 L9.5 14.5 M21 20 L14.5 14.5" stroke="#0d4a87" stroke-width="2" fill="none" stroke-linecap="round" stroke-linejoin="round"/></svg>
<svg class="a" style="left:1556px;top:654px;" width="18" height="18" viewBox="0 0 24 24"><path d="M14 3 H7 Q5 3 5 5 V19 Q5 21 7 21 H12 M14 3 L19 8 V13 M14 3 V7 Q14 8 15 8 H19 M14 18.5 H21 M18.5 16 L21 18.5 L18.5 21" stroke="#0d4a87" stroke-width="2" fill="none" stroke-linecap="round" stroke-linejoin="round"/></svg>
<svg class="a" style="left:1598px;top:654px;" width="18" height="18" viewBox="0 0 24 24"><path d="M5 12 V5 Q5 3 7 3 H14 L19 8 V12 M14 3 V7 Q14 8 15 8 H19" stroke="#0d4a87" stroke-width="2" fill="none" stroke-linecap="round" stroke-linejoin="round"/><text x="12" y="21.8" font-family="Liberation Sans" font-weight="700" font-size="9.6" fill="#0d4a87" stroke="#0d4a87" stroke-width="0.7" text-anchor="middle" letter-spacing="-0.5" textLength="19" lengthAdjust="spacingAndGlyphs">XML</text></svg>
<div class="a" style="left:268px;top:691px;width:1392px;height:1px;background:#e0e0e0"></div>
<div class="t" style="top:709.15px;font-size:14px;font-weight:400;color:#2f2f2f;left:1238px;">Rows per page:</div>
<div class="t" style="top:708.90px;font-size:14.3px;font-weight:400;color:#2f2f2f;left:1352px;">10</div>
<svg class="a" style="left:1374px;top:715px;" width="12" height="6" viewBox="0 0 12 6"><path d="M1 0.5 L11 0.5 L6 5.5Z" fill="#555"/></svg>
<div class="t" style="top:708.73px;font-size:14.5px;font-weight:400;color:#2f2f2f;left:1425px;">1–7 of 7</div>
<svg class="a" style="left:1511px;top:710px;" width="14" height="14" viewBox="0 0 14 14"><path d="M1.5 1.5 V12.5 M11.5 1.5 L6 7 L11.5 12.5" stroke="#b8b8b8" stroke-width="1.8" fill="none"/></svg>
<svg class="a" style="left:1552px;top:710px;" width="12" height="14" viewBox="0 0 12 14"><path d="M9 1.5 L3.5 7 L9 12.5" stroke="#b8b8b8" stroke-width="1.8" fill="none"/></svg>
<svg class="a" style="left:1593px;top:710px;" width="12" height="14" viewBox="0 0 12 14"><path d="M3 1.5 L8.5 7 L3 12.5" stroke="#b8b8b8" stroke-width="1.8" fill="none"/></svg>
<svg class="a" style="left:1631px;top:710px;" width="14" height="14" viewBox="0 0 14 14"><path d="M12.5 1.5 V12.5 M2.5 1.5 L8 7 L2.5 12.5" stroke="#b8b8b8" stroke-width="1.8" fill="none"/></svg>
<div class="a" style="left:1563px;top:781px;width:100px;height:40px;background:#0d4a87;border-radius:20px;border:2px solid #fff;box-shadow:0 1px 3px rgba(0,0,0,.15)"></div>
<div class="a" style="left:1548px;top:777px;width:44px;height:44px;background:linear-gradient(100deg,#2a74b4,#114e8e);border-radius:50%;border:2px solid #fff;box-shadow:0 1px 3px rgba(0,0,0,.2)"></div>
<svg class="a" style="left:1560px;top:790px;" width="21" height="18" viewBox="0 0 21 18"><path d="M6.8 11.9 A5.3 5.3 0 1 0 4.15 11.19 L3.0 13.4 Z" stroke="#fff" stroke-width="1.3" fill="none" stroke-linejoin="round"/><path d="M14.2 15.2 A4.4 4.4 0 1 1 16.4 14.61 L17.9 16.7 Z" stroke="#fff" stroke-width="1.3" fill="#1a5896" stroke-linejoin="round"/><circle cx="5.6" cy="5.5" r="0.75" fill="#fff"/><circle cx="7.9" cy="5.5" r="0.75" fill="#fff"/><circle cx="13" cy="10.9" r="0.75" fill="#fff"/><circle cx="15.3" cy="10.9" r="0.75" fill="#fff"/></svg>
<div class="t" style="top:795.46px;font-size:16px;font-weight:400;color:#fff;left:1601px;">Ajuda</div>
</body></html>
